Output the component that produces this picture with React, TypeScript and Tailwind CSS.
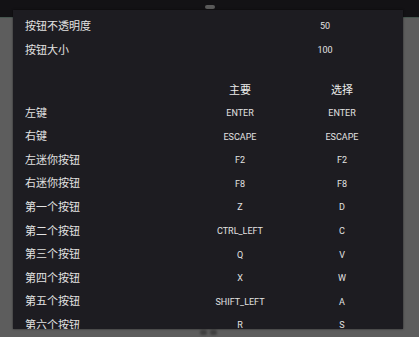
const bindings: [string, string, string][] = [
  ["左键", "ENTER", "ENTER"],
  ["右键", "ESCAPE", "ESCAPE"],
  ["左迷你按钮", "F2", "F2"],
  ["右迷你按钮", "F8", "F8"],
  ["第一个按钮", "Z", "D"],
  ["第二个按钮", "CTRL_LEFT", "C"],
  ["第三个按钮", "Q", "V"],
  ["第四个按钮", "X", "W"],
  ["第五个按钮", "SHIFT_LEFT", "A"],
  ["第六个按钮", "R", "S"],
];

const sliders: [string, string][] = [
  ["按钮不透明度", "50"],
  ["按钮大小", "100"],
];

const cjk = "font-['Roboto','Noto_Sans_CJK_SC',sans-serif]";

export default function App() {
  return (
    <div className={`relative h-[337px] w-[419px] overflow-hidden bg-[#5d5d5d] ${cjk}`}>
      {/* page behind the dialog */}
      <div className="flex h-[18px] items-start justify-center border-b border-[#46564f] bg-[#131215] pt-[5px]">
        <div className="h-[4px] w-[10px] rounded-sm bg-[#5a5a5a]" />
      </div>
      <div className="absolute bottom-0 left-[200px] flex h-[7px] w-[17px] gap-[3px]">
        <div className="h-[5px] w-[7px] rounded-sm bg-[#3e3e3e] blur-[1px]" />
        <div className="h-[5px] w-[7px] rounded-sm bg-[#3e3e3e] blur-[1px]" />
      </div>

      {/* settings dialog */}
      <div className="absolute left-[13px] top-[10px] h-[319px] w-[390px] overflow-hidden bg-[#1d1c21] pl-[12px] pr-[10px] pt-[5px] text-[#e2e2e2] shadow-[0_0_2px_rgba(0,0,0,0.6)]">
        {sliders.map(([label, value]) => (
          <div key={label} className="flex h-6 items-center">
            <div className="w-[270px] text-[11px]">{label}</div>
            <div className="w-[60px] text-center text-[9px]">{value}</div>
          </div>
        ))}

        <div className="mt-[17px] grid h-[22px] grid-cols-[164px_102px_102px] items-center text-[11px] text-[#ececec]">
          <div />
          <div className="text-center">主要</div>
          <div className="text-center">选择</div>
        </div>

        {bindings.map(([label, main, alt]) => (
          <div
            key={label}
            className="grid h-[23.6px] grid-cols-[164px_102px_102px] items-center"
          >
            <div className="text-[11px]">{label}</div>
            <div className="text-center text-[9px]">{main}</div>
            <div className="text-center text-[9px]">{alt}</div>
          </div>
        ))}
      </div>
    </div>
  );
}
